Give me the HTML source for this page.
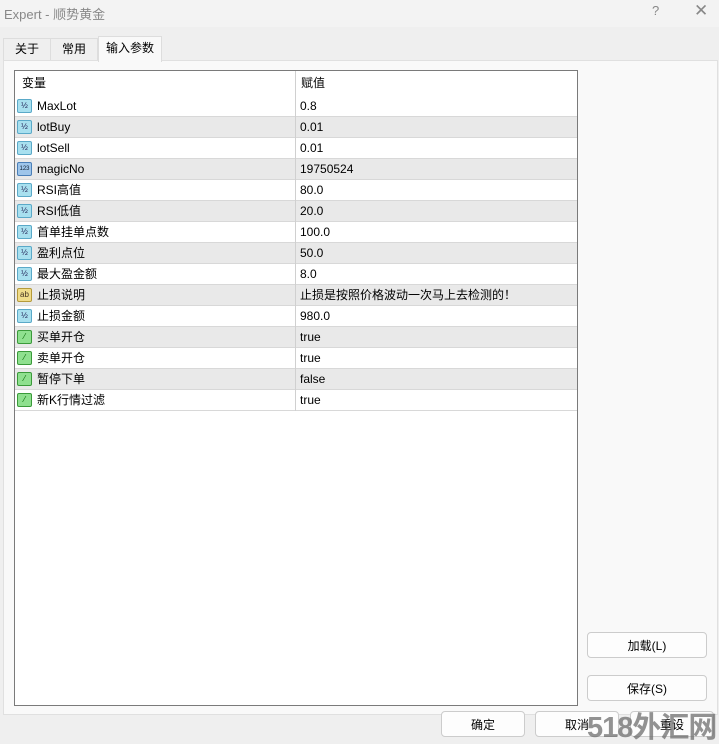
<!DOCTYPE html><html><head><style>
html,body{margin:0;width:719px;height:744px;overflow:hidden}
body{background:#efefef;font-family:"Liberation Sans","Noto Sans CJK SC",sans-serif;font-size:12px;color:#000;position:relative}
.t{position:absolute;left:0;top:0;width:719px;height:27px;background:#f3f3f3}
.t span{position:absolute;left:4px;top:4px;font-size:13px;color:#888}
.tab{position:absolute;top:38px;height:22px;border:1px solid #ddd;border-bottom:none;background:#efefef;line-height:20px;text-align:center}
.panel{position:absolute;left:3px;top:60px;width:713px;height:653px;background:#f9f9f9;border:1px solid #e0e0e0}
.tbl{position:absolute;left:14px;top:70px;width:562px;height:634px;background:#fff;border:1px solid #7a7a7a}
.row{position:absolute;left:0;width:562px;height:20px;border-bottom:1px solid #d8d8d8;line-height:20px}
.row.g{background:#e9e9e9}
.row .n{position:absolute;left:22px}
.row .v{position:absolute;left:280px;border-left:1px solid #d0d0d0;padding-left:4px;height:21px;top:0}
.ic{position:absolute;left:2px;top:3px;width:15px;height:14px;border-radius:2px;font-size:8px;line-height:12px;text-align:center}
.b{background:#a8e0ef;border:1px solid #5aa9c8;box-sizing:border-box;color:#225}
.m{background:#9ec5ea;border:1px solid #4a7fb8;box-sizing:border-box;color:#123;font-size:6px}
.a{background:#f0dc8a;border:1px solid #b59a3a;box-sizing:border-box;color:#432}
.gr{background:#8fe08f;border:1px solid #3a9a3a;box-sizing:border-box;color:#060}
.btn{position:absolute;width:120px;height:26px;border:1px solid #ccc;border-radius:4px;background:#fdfdfd;text-align:center;line-height:26px;box-sizing:border-box}
.wm{position:absolute;left:587px;top:704px;font-size:29px;font-weight:bold;color:rgba(110,110,110,.75);white-space:nowrap;letter-spacing:-1px}
</style></head><body>
<div class="t"><span>Expert - 顺势黄金</span><span style="left:652px;top:3px">?</span><span style="left:694px;top:1px;font-size:17px">✕</span></div>
<div class="tab" style="left:3px;width:46px">关于</div>
<div class="tab" style="left:50px;width:46px">常用</div>
<div class="panel"></div>
<div class="tab" style="left:98px;width:62px;background:#f9f9f9;top:36px;height:25px;line-height:22px">输入参数</div>
<div class="tbl">
<div class="row" style="top:0;height:25px;line-height:25px;border:none"><span class="n" style="left:7px">变量</span><span class="v" style="height:25px;padding-left:5px">赋值</span></div>
<div class="row" style="top:25px"><div class="ic b">½</div><span class="n">MaxLot</span><span class="v">0.8</span></div>
<div class="row g" style="top:46px"><div class="ic b">½</div><span class="n">lotBuy</span><span class="v">0.01</span></div>
<div class="row" style="top:67px"><div class="ic b">½</div><span class="n">lotSell</span><span class="v">0.01</span></div>
<div class="row g" style="top:88px"><div class="ic m">123</div><span class="n">magicNo</span><span class="v">19750524</span></div>
<div class="row" style="top:109px"><div class="ic b">½</div><span class="n">RSI高值</span><span class="v">80.0</span></div>
<div class="row g" style="top:130px"><div class="ic b">½</div><span class="n">RSI低值</span><span class="v">20.0</span></div>
<div class="row" style="top:151px"><div class="ic b">½</div><span class="n">首单挂单点数</span><span class="v">100.0</span></div>
<div class="row g" style="top:172px"><div class="ic b">½</div><span class="n">盈利点位</span><span class="v">50.0</span></div>
<div class="row" style="top:193px"><div class="ic b">½</div><span class="n">最大盈金额</span><span class="v">8.0</span></div>
<div class="row g" style="top:214px"><div class="ic a">ab</div><span class="n">止损说明</span><span class="v">止损是按照价格波动一次马上去检测的！</span></div>
<div class="row" style="top:235px"><div class="ic b">½</div><span class="n">止损金额</span><span class="v">980.0</span></div>
<div class="row g" style="top:256px"><div class="ic gr">⁄</div><span class="n">买单开仓</span><span class="v">true</span></div>
<div class="row" style="top:277px"><div class="ic gr">⁄</div><span class="n">卖单开仓</span><span class="v">true</span></div>
<div class="row g" style="top:298px"><div class="ic gr">⁄</div><span class="n">暂停下单</span><span class="v">false</span></div>
<div class="row" style="top:319px"><div class="ic gr">⁄</div><span class="n">新K行情过滤</span><span class="v">true</span></div>
</div>
<div class="btn" style="left:587px;top:632px">加载(L)</div>
<div class="btn" style="left:587px;top:675px">保存(S)</div>
<div class="btn" style="left:441px;top:711px;width:84px">确定</div>
<div class="btn" style="left:535px;top:711px;width:84px">取消</div>
<div class="btn" style="left:630px;top:711px;width:84px">重设</div>
<div class="wm">518外汇网</div>
</body></html>
